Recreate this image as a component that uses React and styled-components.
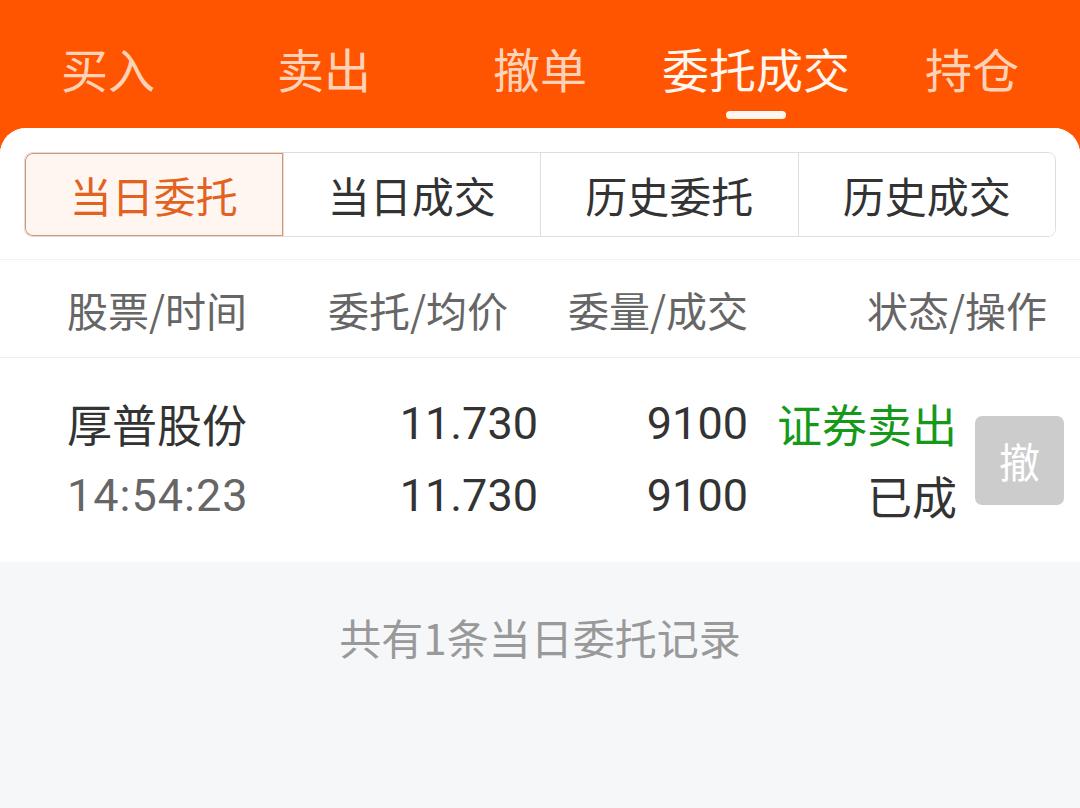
import React from "react";
import styled, { createGlobalStyle } from "styled-components";

const Global = createGlobalStyle`
  html, body { margin: 0; padding: 0; }
  body {
    font-family: Roboto, "Noto Sans CJK SC", sans-serif;
    background: #f6f7f9;
  }
`;

const Page = styled.div`
  width: 1080px;
  min-height: 808px;
  background: #ff5500;
  display: flex;
  flex-direction: column;
`;

const TopTabs = styled.nav`
  height: 128px;
  display: grid;
  grid-template-columns: repeat(5, 1fr);
`;

const TopTab = styled.div`
  position: relative;
  display: flex;
  align-items: center;
  justify-content: center;
  padding-top: 20px;
  padding-bottom: 14px;
  font-size: 47px;
  font-family: "Noto Sans CJK SC", sans-serif;
  color: ${(p) => (p.$active ? "#fff6ef" : "#ffd2b8")};
  &::after {
    content: "";
    display: ${(p) => (p.$active ? "block" : "none")};
    position: absolute;
    left: 50%;
    bottom: 9px;
    width: 60px;
    height: 8px;
    margin-left: -30px;
    border-radius: 4px;
    background: #fff6ef;
  }
`;

const Card = styled.main`
  flex: 1;
  background: #f6f7f9;
  border-radius: 26px 26px 0 0;
  overflow: hidden;
  display: flex;
  flex-direction: column;
`;

const WhitePart = styled.section`
  background: #ffffff;
`;

const SegmentWrap = styled.div`
  padding: 24px 24px 22px;
  border-bottom: 1px solid #f2f2f2;
`;

const Segment = styled.div`
  display: grid;
  grid-template-columns: repeat(4, 1fr);
  height: 85px;
  border: 1px solid #dedede;
  border-radius: 8px;
  overflow: hidden;
  box-sizing: border-box;
`;

const SegItem = styled.div`
  display: flex;
  align-items: center;
  justify-content: center;
  font-size: 42px;
  font-family: "Noto Sans CJK SC", sans-serif;
  color: ${(p) => (p.$active ? "#e2621f" : "#333333")};
  background: ${(p) => (p.$active ? "#fff6f1" : "#ffffff")};
  border-left: 1px solid #dedede;
  box-sizing: border-box;
  &:first-child { border-left: none; }
  ${(p) =>
    p.$active &&
    `box-shadow: inset 0 0 0 1px #d6956c; border-radius: 8px 0 0 8px;`}
`;

const Grid = styled.div`
  display: grid;
  grid-template-columns: 67px 233px 238px 210px 209px 18px 89px 16px;
  align-items: center;
`;

const HeadRow = styled(Grid)`
  height: 97px;
  border-bottom: 1px solid #eeeeee;
  font-size: 41px;
  color: #666666;
  font-family: "Noto Sans CJK SC", sans-serif;
`;

const HeadCell = styled.div`
  grid-column: ${(p) => p.$col};
  text-align: ${(p) => p.$align || "right"};
  margin-right: ${(p) => p.$inset || 0}px;
  white-space: nowrap;
`;

const DataRow = styled(Grid)`
  height: 204px;
  grid-template-rows: 72px 72px;
  align-content: center;
  font-size: 45px;
`;

const Cell = styled.div`
  grid-column: ${(p) => p.$col};
  grid-row: ${(p) => p.$row};
  text-align: ${(p) => p.$align || "right"};
  color: ${(p) => p.$color || "#333333"};
  font-family: ${(p) => (p.$num ? 'Roboto, "Noto Sans CJK SC", sans-serif' : '"Noto Sans CJK SC", sans-serif')};
  letter-spacing: ${(p) => (p.$wide ? "1px" : "0")};
  white-space: nowrap;
  line-height: 72px;
`;

const CancelButton = styled.button`
  grid-column: 7;
  grid-row: 1 / span 2;
  width: 89px;
  height: 89px;
  border: none;
  border-radius: 7px;
  background: #cccccc;
  color: #ffffff;
  font-size: 41px;
  font-family: "Noto Sans CJK SC", sans-serif;
  padding: 0;
`;

const Footer = styled.div`
  text-align: center;
  padding-top: 44px;
  font-size: 42px;
  color: #999999;
  font-family: "Noto Sans CJK SC", sans-serif;
`;

const tabs = ["买入", "卖出", "撤单", "委托成交", "持仓"];
const segs = ["当日委托", "当日成交", "历史委托", "历史成交"];

export default function App() {
  return (
    <Page>
      <Global />
      <TopTabs>
        {tabs.map((t, i) => (
          <TopTab key={t} $active={i === 3}>{t}</TopTab>
        ))}
      </TopTabs>
      <Card>
        <WhitePart>
          <SegmentWrap>
            <Segment>
              {segs.map((s, i) => (
                <SegItem key={s} $active={i === 0}>{s}</SegItem>
              ))}
            </Segment>
          </SegmentWrap>
          <HeadRow>
            <HeadCell $col={2} $align="left">股票/时间</HeadCell>
            <HeadCell $col={3} $inset={30}>委托/均价</HeadCell>
            <HeadCell $col={4}>委量/成交</HeadCell>
            <HeadCell $col="5 / span 3" $inset={17}>状态/操作</HeadCell>
          </HeadRow>
          <DataRow>
            <Cell $col={2} $row={1} $align="left">厚普股份</Cell>
            <Cell $col={2} $row={2} $align="left" $num $wide $color="#666666">14:54:23</Cell>
            <Cell $col={3} $row={1} $num>11.730</Cell>
            <Cell $col={3} $row={2} $num>11.730</Cell>
            <Cell $col={4} $row={1} $num>9100</Cell>
            <Cell $col={4} $row={2} $num>9100</Cell>
            <Cell $col={5} $row={1} $color="#16991b">证券卖出</Cell>
            <Cell $col={5} $row={2}>已成</Cell>
            <CancelButton>撤</CancelButton>
          </DataRow>
        </WhitePart>
        <Footer>共有1条当日委托记录</Footer>
      </Card>
    </Page>
  );
}
